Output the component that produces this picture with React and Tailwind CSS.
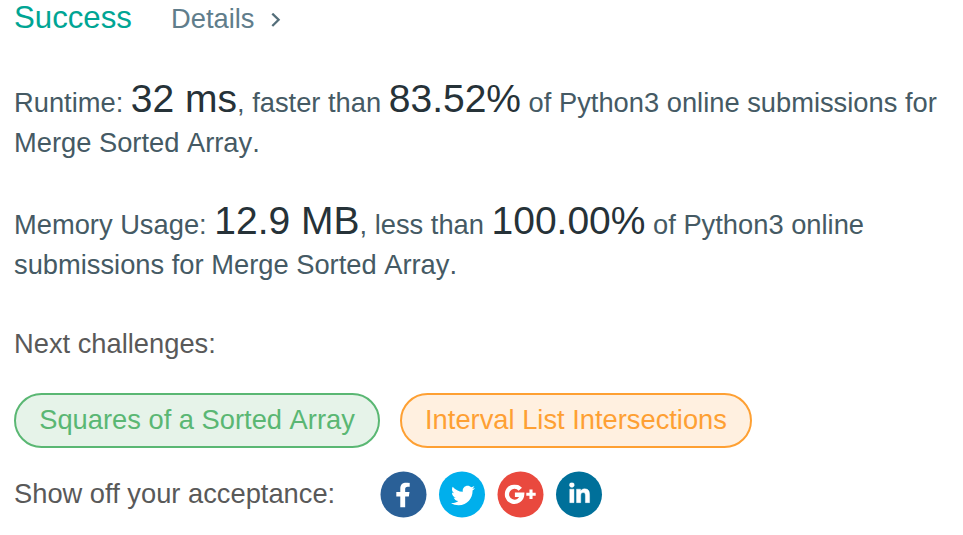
import { FaFacebookF, FaTwitter, FaLinkedinIn } from "react-icons/fa";

function Value({ children }) {
  return <span className="text-[39px] leading-none text-[#263238]">{children}</span>;
}

function Problem({ children }) {
  return <span className="[font-kerning:none]">{children}</span>;
}

function Pill({ className, children }) {
  return (
    <a className={`flex h-[55px] items-center justify-center rounded-full border-2 pb-[1px] ${className}`}>
      {children}
    </a>
  );
}

function Share({ className, children }) {
  return (
    <a className={`flex size-[46px] items-center justify-center rounded-full text-white ${className}`}>
      {children}
    </a>
  );
}

export default function App() {
  return (
    <main className="flex h-[535px] w-[963px] flex-col overflow-hidden bg-white pl-[14px] font-['Liberation_Sans',Arial,sans-serif] text-[27.3px] leading-[40px] text-[#455a64]">
      <header className="flex h-[79px] shrink-0 items-baseline pt-px">
        <h1 className="w-[157px] text-[31.2px] leading-[34px] text-[#00a594]">Success</h1>
        <a className="flex items-center leading-[34px] text-[#607d8b]">
          Details
          <svg className="mt-[2px] ml-[17px]" width="10" height="14" viewBox="0 0 10 14" fill="none" stroke="#546e7a" strokeWidth="2.3">
            <path d="M1.3 0.6 L7.6 6.8 L1.3 13" />
          </svg>
        </a>
      </header>
      <p className="h-[122px] shrink-0 pr-3">
        Runtime: <Value>32 ms</Value>, faster than <Value>83.52%</Value> of Python3 online submissions for{" "}
        <Problem>Merge Sorted Array.</Problem>
      </p>
      <p className="h-[123px] shrink-0 pr-3">
        Memory Usage: <Value>12.9 MB</Value>, less than <Value>100.00%</Value> of Python3 online submissions for{" "}
        <Problem>Merge Sorted Array.</Problem>
      </p>
      <div className="h-[69px] shrink-0 text-[#595959]">Next challenges:</div>
      <div className="flex shrink-0 gap-5">
        <Pill className="w-[366px] border-[#5ab773] bg-[#e6f3e9] text-[#5ab773]">
          <Problem>Squares of a Sorted Array</Problem>
        </Pill>
        <Pill className="w-[352px] border-[#fea033] bg-[#fff0e0] text-[#fea033]">Interval List Intersections</Pill>
      </div>
      <div className="mt-[23px] flex shrink-0 items-center text-[#595959]">
        <span className="w-[366px]">Show off your acceptance:</span>
        <div className="flex translate-y-[0.5px]">
          <Share className="mr-[13px] translate-x-[0.5px] bg-[#2a6097]">
            <FaFacebookF size={25} className="mt-[1px] mr-[2px] w-[23px]" />
          </Share>
          <Share className="mr-[12px] bg-[#00afec]">
            <FaTwitter size={24} className="mt-px ml-[2px]" />
          </Share>
          <Share className="mr-[13px] translate-x-[0.5px] bg-[#e9493e]">
            <svg className="-mt-px" width="32" height="20" viewBox="0 0 32 20" fill="none" stroke="currentColor">
              <path d="M15.8 4.8 A7.6 7.6 0 1 0 17.6 10.2 H10.4" strokeWidth="4.4" />
              <path d="M26.5 4.9 V14.5 M21.8 9.7 H31.2" strokeWidth="3.1" />
            </svg>
          </Share>
          <Share className="bg-[#00709a]">
            <FaLinkedinIn size={23} className="-mt-px stroke-current stroke-[10px]" />
          </Share>
        </div>
      </div>
    </main>
  );
}
